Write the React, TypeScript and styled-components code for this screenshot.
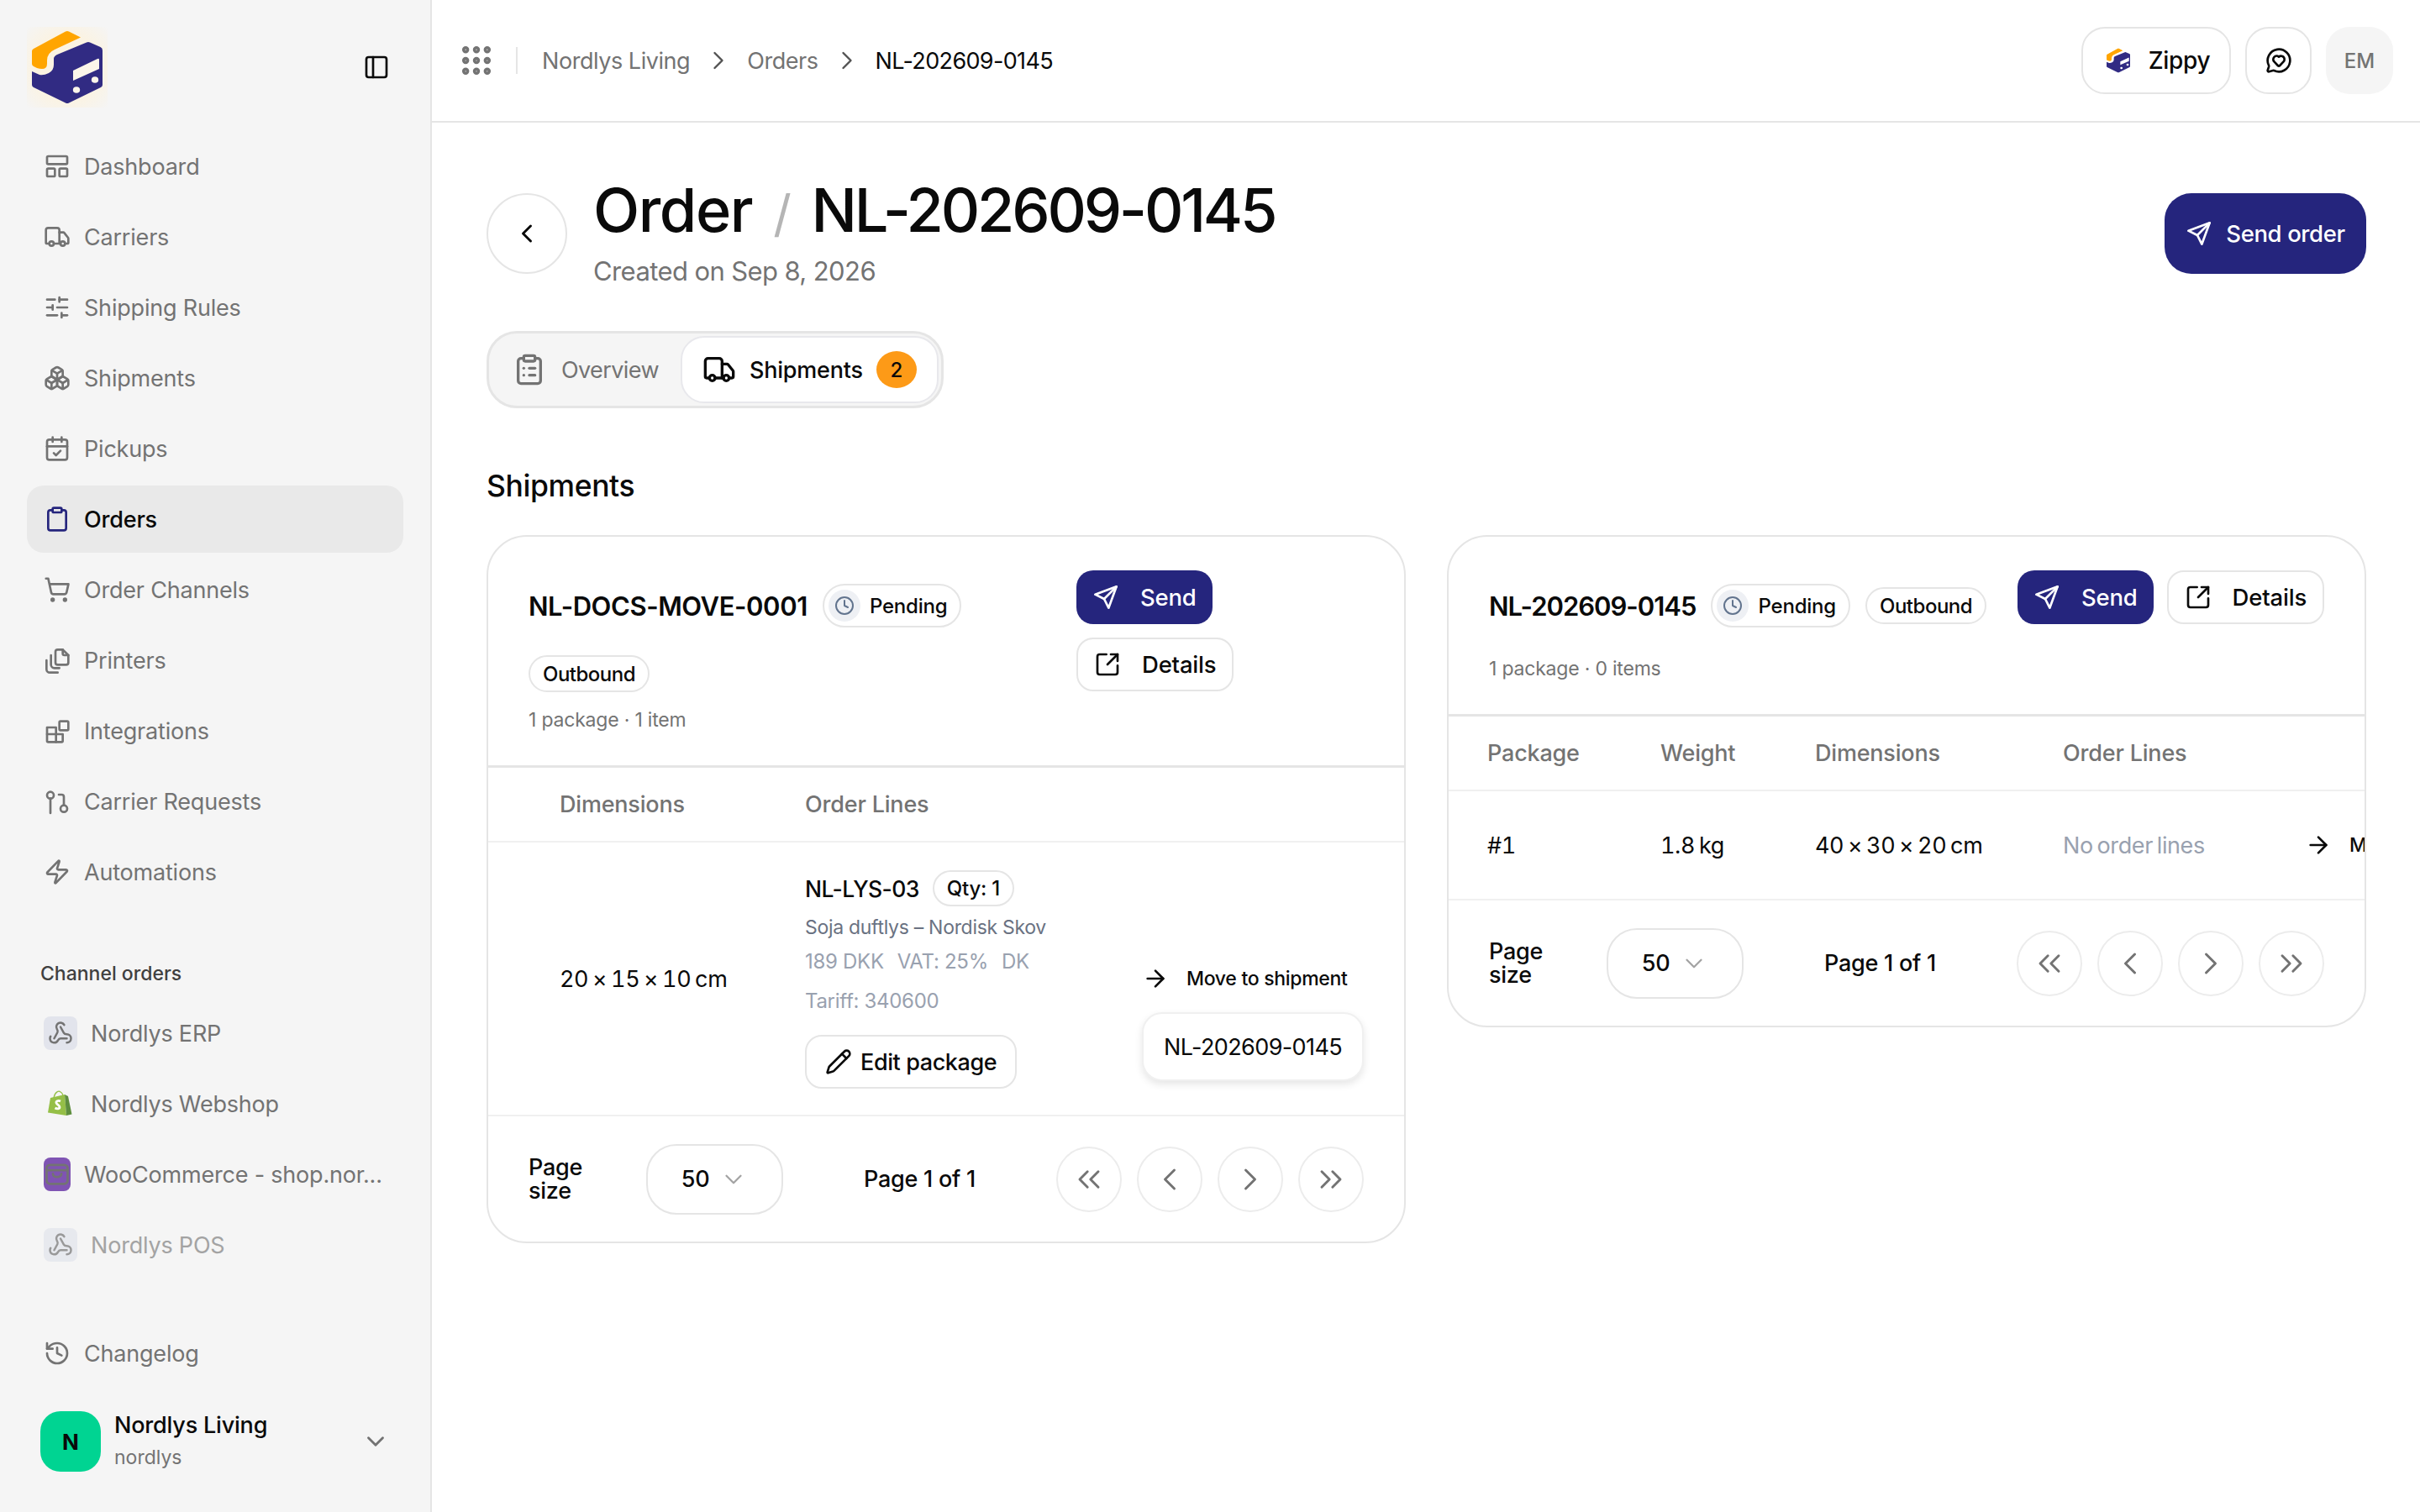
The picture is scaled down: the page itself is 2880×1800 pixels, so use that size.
import React from 'react'
import styled, { createGlobalStyle } from 'styled-components'
import {
  ArrowRight,
  Boxes,
  CalendarCheck,
  ChevronDown,
  ChevronLeft,
  ChevronRight,
  ChevronsLeft,
  ChevronsRight,
  Clipboard,
  ClipboardList,
  Clock,
  Grip,
  History,
  LayoutPanelTop,
  MessageCircleHeart,
  PanelLeft,
  Pencil,
  ShoppingCart,
  SlidersHorizontal,
  SquareArrowOutUpRight,
  Truck,
  Webhook,
  Zap,
} from 'lucide-react'

const GlobalStyle = createGlobalStyle`
  html, body {
    margin: 0;
    padding: 0;
    background: #fff;
  }
  body {
    font-family: Inter, "Liberation Sans", sans-serif;
    color: #0a0a0a;
  }
  * {
    box-sizing: border-box;
  }
`

const Shell = styled.div`
  display: flex;
  width: 2880px;
  height: 1800px;
  overflow: hidden;
`

const Sidebar = styled.aside`
  width: 514px;
  flex: none;
  background: #f5f5f5;
  border-right: 2px solid #e5e5e5;
  padding: 32px 32px 0;
  display: flex;
  flex-direction: column;
`

const SidebarTop = styled.div`
  display: flex;
  align-items: center;
  justify-content: space-between;
  height: 96px;
  padding-right: 16px;
  color: #0a0a0a;
  margin-bottom: 30px;
`

const NavList = styled.nav`
  display: flex;
  flex-direction: column;
  gap: 4px;
`

const NavItem = styled.div<{ $active?: boolean; $muted?: boolean }>`
  display: flex;
  align-items: center;
  height: 80px;
  padding-left: 20px;
  gap: 16px;
  border-radius: 20px;
  font-size: 27px;
  letter-spacing: -0.2px;
  white-space: nowrap;
  background: ${p => (p.$active ? '#e9e9e9' : 'transparent')};
  color: ${p => (p.$active ? '#0a0a0a' : p.$muted ? '#a3a3a3' : '#737373')};
  font-weight: ${p => (p.$active ? 500 : 400)};
  svg {
    flex: none;
    color: ${p => (p.$active ? '#25257d' : '#737373')};
  }
`

const GroupLabel = styled.div`
  margin: 64px 0 0 16px;
  height: 48px;
  line-height: 34px;
  font-size: 23px;
  font-weight: 500;
  color: #404040;
`

const ChannelBadge = styled.span<{ $faded?: boolean; $bare?: boolean }>`
  width: 40px;
  height: 40px;
  flex: none;
  display: flex;
  align-items: center;
  justify-content: center;
  border-radius: 8px;
  background: ${p => (p.$bare ? 'transparent' : '#e2e4ec')};
  opacity: ${p => (p.$faded ? 0.7 : 1)};
`

const SidebarBottom = styled.div`
  margin-top: auto;
  padding-bottom: 48px;
`

const Account = styled.div`
  display: flex;
  align-items: center;
  height: 72px;
  margin: 29px 0 0 16px;
  color: #737373;
  padding-right: 16px;
`

const Avatar = styled.span`
  width: 72px;
  height: 72px;
  border-radius: 24px;
  background: #00d492;
  color: #0a0a0a;
  font-size: 26px;
  font-weight: 700;
  display: flex;
  align-items: center;
  justify-content: center;
`

const AccountText = styled.div`
  flex: 1;
  margin-left: 16px;
`

const AccountName = styled.div`
  font-size: 27px;
  line-height: 38px;
  font-weight: 500;
  color: #0a0a0a;
  letter-spacing: -0.2px;
`

const AccountSlug = styled.div`
  font-size: 23px;
  line-height: 38px;
  color: #737373;
`

const Main = styled.main`
  flex: 1;
  min-width: 0;
`

const TopBar = styled.header`
  height: 146px;
  border-bottom: 2px solid #e5e5e5;
  display: flex;
  align-items: center;
  padding: 0 32px 0 31px;
`

const Crumbs = styled.div`
  display: flex;
  align-items: center;
  flex: 1;
  font-size: 27px;
  letter-spacing: -0.45px;
  color: #737373;
`

const CrumbDivider = styled.span`
  width: 2px;
  height: 32px;
  background: #e5e5e5;
  margin: 0 29px 0 25px;
`

const CrumbSep = styled.span`
  display: flex;
  margin: 0 16px;
  color: #525252;
`

const CrumbCurrent = styled.span`
  color: #0a0a0a;
  letter-spacing: -0.65px;
`

const TopActions = styled.div`
  display: flex;
  align-items: center;
  gap: 17px;
`

const ZippyButton = styled.button`
  height: 80px;
  width: 178px;
  padding: 0 0 0 3px;
  display: flex;
  align-items: center;
  justify-content: center;
  gap: 20px;
  border: 2px solid #e5e5e5;
  border-radius: 28px;
  background: #fff;
  font: inherit;
  font-size: 28px;
  font-weight: 500;
  letter-spacing: -0.3px;
  color: #0a0a0a;
`

const ChatButton = styled(ZippyButton)`
  width: 79px;
  padding: 0;
`

const Initials = styled.div`
  width: 80px;
  height: 80px;
  border-radius: 28px;
  background: #f5f5f5;
  color: #737373;
  font-size: 24px;
  font-weight: 500;
  display: flex;
  align-items: center;
  justify-content: center;
`

const Page = styled.div`
  padding: 64px 64px 0 65px;
`

const PageHeader = styled.div`
  display: flex;
  align-items: center;
  justify-content: space-between;
`

const HeaderLeft = styled.div`
  display: flex;
  align-items: center;
  gap: 31px;
`

const BackButton = styled.button`
  width: 96px;
  height: 96px;
  border: 2px solid #e5e5e5;
  border-radius: 50%;
  background: #fff;
  color: #0a0a0a;
  display: flex;
  align-items: center;
  justify-content: center;
  padding: 0;
`

const Title = styled.h1`
  margin: 0;
  font-size: 72px;
  line-height: 80px;
  font-weight: 500;
  letter-spacing: -1.4px;
  color: #0a0a0a;
  white-space: nowrap;
`

const TitleSlash = styled.span`
  display: inline-block;
  color: #b5b5b5;
  font-size: 60px;
  font-weight: 400;
  margin: 0 25px;
`

const TitleId = styled.span`
  letter-spacing: -3.2px;
`

const Subtitle = styled.div`
  font-size: 31px;
  line-height: 46px;
  margin-top: 6px;
  color: #737373;
  letter-spacing: -0.6px;
`

const PrimaryLarge = styled.button`
  height: 96px;
  width: 240px;
  border: 0;
  border-radius: 32px;
  background: #25257d;
  color: #fff;
  font: inherit;
  font-size: 27.5px;
  font-weight: 500;
  letter-spacing: -0.4px;
  display: flex;
  align-items: center;
  justify-content: center;
  gap: 16px;
  white-space: nowrap;
`

const Tabs = styled.div`
  display: inline-flex;
  align-items: center;
  margin-top: 48px;
  height: 92px;
  padding: 0 3px 0 0;
  background: #f5f5f5;
  border: 3px solid #e5e5e5;
  border-radius: 36px;
`

const Tab = styled.div<{ $active?: boolean }>`
  display: flex;
  align-items: center;
  height: ${p => (p.$active ? '80px' : 'auto')};
  border-radius: 28px;
  font-size: 27px;
  letter-spacing: ${p => (p.$active ? '-0.2px' : '-0.6px')};
  font-weight: ${p => (p.$active ? 500 : 400)};
  color: ${p => (p.$active ? '#0a0a0a' : '#737373')};
  background: ${p => (p.$active ? '#fff' : 'transparent')};
  border: ${p => (p.$active ? '2px solid #e8e8ec' : '0')};
  padding: ${p => (p.$active ? '0 24px 0 24px' : '0 26px 0 28px')};
  gap: ${p => (p.$active ? '16px' : '18px')};
`

const CountBadge = styled.span`
  width: 48px;
  height: 44px;
  border-radius: 50%;
  background: #fd9a17;
  color: #0a0a0a;
  font-size: 24px;
  font-weight: 500;
  display: flex;
  align-items: center;
  justify-content: center;
`

const SectionTitle = styled.h2`
  margin: 69px 0 34px;
  font-size: 35.500px;
  line-height: 48px;
  font-weight: 500;
  letter-spacing: -0.4px;
  color: #0a0a0a;
`

const CardGrid = styled.div`
  display: grid;
  grid-template-columns: 1fr 1fr;
  gap: 49px;
  align-items: start;
`

const Card = styled.section`
  border: 2px solid #e5e5e5;
  border-radius: 48px;
  overflow: hidden;
  background: #fff;
`

const CardHeader = styled.div`
  display: flex;
  justify-content: space-between;
  align-items: flex-start;
  padding: 40px 48px 37px;
  border-bottom: 3px solid #e5e5e5;
`

const CardInfo = styled.div`
  padding-top: 16px;
`

const TitleRow = styled.div<{ $wrapped?: boolean }>`
  display: flex;
  flex-wrap: ${p => (p.$wrapped ? 'wrap' : 'nowrap')};
  align-items: center;
  gap: ${p => (p.$wrapped ? '33px 18px' : '0 18px')};
  width: ${p => (p.$wrapped ? '530px' : 'auto')};
  white-space: nowrap;
`

const ShipmentId = styled.span<{ $digits?: boolean }>`
  font-size: 31px;
  font-weight: 600;
  letter-spacing: ${p => (p.$digits ? '-1px' : '-0.42px')};
  color: #0a0a0a;
`

const StatusPill = styled.span`
  height: 52px;
  display: inline-flex;
  align-items: center;
  gap: 11px;
  padding: 0 15px 0 5px;
  border: 2px solid #e5e5e5;
  border-radius: 26px;
  font-size: 24px;
  letter-spacing: -0.2px;
  font-weight: 500;
`

const StatusIcon = styled.span`
  width: 38px;
  height: 38px;
  border-radius: 50%;
  background: #eef0f4;
  color: #62748e;
  display: flex;
  align-items: center;
  justify-content: center;
`

const Pill = styled.span`
  height: 44px;
  display: inline-flex;
  align-items: center;
  padding: 0 15px;
  border: 2px solid #e5e5e5;
  border-radius: 22px;
  font-size: 24px;
  letter-spacing: -0.5px;
  font-weight: 500;
`

const CardMeta = styled.div<{ $wrapped?: boolean }>`
  margin-top: ${p => (p.$wrapped ? '16px' : '32px')};
  font-size: 23px;
  line-height: 34px;
  letter-spacing: -0.2px;
  color: #737373;
`

const CardActions = styled.div<{ $stacked?: boolean }>`
  display: flex;
  flex-direction: ${p => (p.$stacked ? 'column' : 'row')};
  align-items: flex-start;
  gap: 16px;
  width: ${p => (p.$stacked ? '342px' : 'auto')};
`

const SmallButton = styled.button<{ $primary?: boolean }>`
  height: 64px;
  display: flex;
  align-items: center;
  gap: 25px;
  padding: 0 19px;
  border-radius: 20px;
  border: ${p => (p.$primary ? '0' : '2px solid #e5e5e5')};
  background: ${p => (p.$primary ? '#25257d' : '#fff')};
  color: ${p => (p.$primary ? '#fff' : '#0a0a0a')};
  font: inherit;
  font-size: 27.5px;
  font-weight: 500;
  letter-spacing: -0.2px;
  white-space: nowrap;
`

const TableRow = styled.div<{ $cols: string; $pad: number; $head?: boolean }>`
  display: grid;
  grid-template-columns: ${p => p.$cols};
  padding-left: ${p => p.$pad}px;
  align-items: center;
  border-bottom: 2px solid #f0f0f0;
  font-size: 27px;
  font-variant-numeric: tabular-nums;
  letter-spacing: ${p => (p.$head ? '-0.2px' : '-0.4px')};
  word-spacing: ${p => (p.$head ? '0' : '-2px')};
  white-space: nowrap;
  min-height: ${p => (p.$head ? '89px' : '130px')};
  color: ${p => (p.$head ? '#737373' : '#0a0a0a')};
  font-weight: ${p => (p.$head ? 500 : 400)};
`

const LineCell = styled.div`
  padding: 33px 0 31px;
  word-spacing: 0;
  font-variant-numeric: normal;
`

const LineHead = styled.div`
  display: flex;
  align-items: center;
  gap: 16px;
  font-size: 26.500px;
  letter-spacing: -0.6px;
  font-weight: 500;
`

const QtyPill = styled(Pill)`
  height: 43px;
  letter-spacing: -0.2px;
`

const LineName = styled.div`
  margin-top: 8px;
  font-size: 23px;
  line-height: 34px;
  letter-spacing: -0.3px;
  color: #6a7282;
`

const LineFacts = styled.div`
  margin-top: 7px;
  display: flex;
  gap: 16px;
  font-size: 24px;
  line-height: 34px;
  letter-spacing: -0.3px;
  color: #99a1af;
`

const LineTariff = styled(LineFacts)`
  margin-top: 13px;
`

const EditButton = styled(SmallButton)`
  margin-top: 23px;
  gap: 10px;
  padding: 0 22px;
  font-size: 27px;
  letter-spacing: -0.4px;
`

const NoLines = styled.span`
  color: #99a1af;
`

const MoveCell = styled.div`
  position: relative;
  word-spacing: 0;
`

const MoveLabel = styled.div`
  display: flex;
  align-items: center;
  gap: 21px;
  font-size: 23px;
  letter-spacing: -0.3px;
  word-spacing: 0;
  font-weight: 500;
`

const MoveMenu = styled.div`
  position: absolute;
  left: 0;
  top: 56px;
  width: 264px;
  height: 82px;
  border-radius: 24px;
  background: #fff;
  border: 2px solid #f0f0f0;
  box-shadow: 0 4px 10px rgba(0, 0, 0, 0.1);
  display: flex;
  align-items: center;
  justify-content: center;
  font-size: 27px;
  font-variant-numeric: normal;
  letter-spacing: -0.6px;
`

const CardFooter = styled.div`
  display: flex;
  align-items: center;
  height: 149px;
  padding: 0 48px;
  font-size: 27px;
  font-weight: 500;
  letter-spacing: -0.25px;
`

const PageSizeLabel = styled.div`
  width: 140px;
  padding-right: 40px;
  line-height: 28px;
`

const SizeSelect = styled.div`
  width: 163px;
  height: 84px;
  border: 2px solid #e5e5e5;
  border-radius: 36px;
  display: flex;
  align-items: center;
  justify-content: center;
  gap: 12px;
  color: #0a0a0a;
  svg {
    color: #a3a3a3;
  }
`

const PageCount = styled.div`
  flex: 1;
  text-align: center;
`

const Pager = styled.div`
  display: flex;
  gap: 18px;
`

const PagerButton = styled.button`
  width: 78px;
  height: 78px;
  padding: 0;
  border: 2px solid #ececec;
  border-radius: 50%;
  background: #fff;
  color: #737373;
  display: flex;
  align-items: center;
  justify-content: center;
`

const BRAND_NAVY = '#312b83'

const Logo = ({ size, cream = '#fbf5ea' }: { size: number; cream?: string }) => (
  <svg width={size} height={size} viewBox="0 0 96 96">
    <path
      d="M71 18.500 Q73 17.500 75 18.500 L87.500 24 Q90 25 90 28 L90 69 Q90 71 88 72 L50 90.500 Q48 91.500 46 90.500 L8 72 Q6 71 6 69 L6 53 L15 57 Q20 58 26 55 Q32 52 32 45 L32 38 Q32 35 36 33 Z"
      fill={BRAND_NAVY}
    />
    <path
      d="M46 5.500 Q48 4.500 50 5.500 L64 12.500 L33 27 Q24 31 24 40 L24 44 Q24 50 18 50 Q15 50 12 49 L8 47 Q6 46 6 44 L6 29 Q6 27 8 26 Z"
      fill="#ffa500"
    />
    <path d="M55 52 L84 38 Q86 37 86 39 L86 50 L55 64 Z" fill={cream} />
    <ellipse cx="59" cy="75" rx="4.200" ry="3.800" fill={cream} />
    <ellipse cx="81" cy="63" rx="4.200" ry="3.800" fill={cream} />
  </svg>
)

const LogoBox = styled.div`
  width: 96px;
  height: 96px;
  background: radial-gradient(circle, #fbf3e2 55%, #f6f4f0 90%, #f5f5f5 100%);
`

const SendIcon = ({ size = 32 }: { size?: number }) => (
  <svg
    width={size}
    height={size}
    viewBox="0 0 24 24"
    fill="none"
    stroke="currentColor"
    strokeWidth="2"
    strokeLinecap="round"
    strokeLinejoin="round"
  >
    <path d="M21.500 2.500 L2.500 9.500 L10.500 13.500 L14.500 21.500 Z" />
    <path d="M21.500 2.500 L10.500 13.500" />
  </svg>
)

const PrinterIcon = () => (
  <svg width="32" height="32" viewBox="0 0 24 24" fill="none" stroke="currentColor" strokeWidth="2" strokeLinecap="round" strokeLinejoin="round">
    <path d="M10.500 4.500a2 2 0 0 1 2-2h4.500l5 5v6.500a2 2 0 0 1-2 2h-7.500a2 2 0 0 1-2-2z" />
    <path d="M17 2.500v3.500a1.500 1.500 0 0 0 1.500 1.500h3.500" />
    <path d="M6.500 7.500v8.500a3 3 0 0 0 3 3h4.500" />
    <path d="M2.500 12v8a3 3 0 0 0 3 3h7" />
  </svg>
)

const IntegrationsIcon = () => (
  <svg width="32" height="32" viewBox="0 0 24 24" fill="none" stroke="currentColor" strokeWidth="2" strokeLinecap="round" strokeLinejoin="round">
    <path d="M3 9h8v6h6v6a1 1 0 0 1-1 1H4a1 1 0 0 1-1-1z" />
    <path d="M3 15h8v7" />
    <rect x="14" y="3.500" width="8" height="8" rx="1" />
  </svg>
)

const RequestsIcon = () => (
  <svg width="32" height="32" viewBox="0 0 24 24" fill="none" stroke="currentColor" strokeWidth="2" strokeLinecap="round" strokeLinejoin="round">
    <circle cx="6" cy="6.500" r="3" />
    <path d="M6 9.500v13" />
    <path d="M13.500 6h2.500a2 2 0 0 1 2 2v7" />
    <circle cx="18" cy="18.500" r="3" />
  </svg>
)

const ShopifyIcon = () => (
  <svg width="40" height="40" viewBox="0 0 40 40">
    <path d="M8 13 L25 9 L27 34 L5 30.500 Z" fill="#95bf47" />
    <path d="M25 9 L29 11 L33.500 32.500 L27 34 Z" fill="#5e8e3e" />
    <path d="M12 13 C13 6 18 4 20 6 C22 7 23 10 23 12" fill="none" stroke="#95bf47" strokeWidth="1.300" />
    <path d="M20 17 C17 15.500 14.500 17 15 19 C15.500 21 19 21.500 19 24 C19 26 16 26.500 13.500 25" fill="none" stroke="#fff" strokeWidth="2.800" />
  </svg>
)

const WooIcon = styled.span`
  width: 32px;
  height: 40px;
  flex: none;
  border-radius: 8px;
  background: #7f54b3;
  display: flex;
  align-items: center;
  justify-content: center;
  color: #6f6a7d;
`

const WooBag = () => (
  <svg width="30" height="30" viewBox="0 0 24 24" fill="none" stroke="currentColor" strokeWidth="2.200" strokeLinecap="round" strokeLinejoin="round">
    <rect x="2" y="3" width="20" height="18" rx="3" />
    <path d="M2 8h20" />
    <path d="M8 11.500a4 3 0 0 0 8 0" />
  </svg>
)

const PageFooter = () => (
  <CardFooter>
    <PageSizeLabel>Page size</PageSizeLabel>
    <SizeSelect>
      50 <ChevronDown size={34} strokeWidth={1.6} />
    </SizeSelect>
    <PageCount>Page 1 of 1</PageCount>
    <Pager>
      <PagerButton><ChevronsLeft size={44} strokeWidth={1.6} /></PagerButton>
      <PagerButton><ChevronLeft size={44} strokeWidth={1.6} /></PagerButton>
      <PagerButton><ChevronRight size={44} strokeWidth={1.6} /></PagerButton>
      <PagerButton><ChevronsRight size={44} strokeWidth={1.6} /></PagerButton>
    </Pager>
  </CardFooter>
)

const Status = () => (
  <StatusPill>
    <StatusIcon><Clock size={24} /></StatusIcon>
    Pending
  </StatusPill>
)

const navItems = [
  { label: 'Dashboard', icon: <LayoutPanelTop size={32} /> },
  { label: 'Carriers', icon: <Truck size={32} /> },
  { label: 'Shipping Rules', icon: <SlidersHorizontal size={32} /> },
  { label: 'Shipments', icon: <Boxes size={32} /> },
  { label: 'Pickups', icon: <CalendarCheck size={32} /> },
  { label: 'Orders', icon: <Clipboard size={32} />, active: true },
  { label: 'Order Channels', icon: <ShoppingCart size={32} /> },
  { label: 'Printers', icon: <PrinterIcon /> },
  { label: 'Integrations', icon: <IntegrationsIcon /> },
  { label: 'Carrier Requests', icon: <RequestsIcon /> },
  { label: 'Automations', icon: <Zap size={32} /> },
]

const App = () => (
  <Shell>
    <GlobalStyle />
    <Sidebar>
      <SidebarTop>
        <LogoBox><Logo size={96} /></LogoBox>
        <PanelLeft size={32} />
      </SidebarTop>
      <NavList>
        {navItems.map(item => (
          <NavItem key={item.label} $active={item.active}>
            {item.icon}
            {item.label}
          </NavItem>
        ))}
      </NavList>
      <GroupLabel>Channel orders</GroupLabel>
      <NavList>
        <NavItem>
          <ChannelBadge><Webhook size={30} /></ChannelBadge>
          Nordlys ERP
        </NavItem>
        <NavItem>
          <ChannelBadge $bare><ShopifyIcon /></ChannelBadge>
          Nordlys Webshop
        </NavItem>
        <NavItem>
          <WooIcon><WooBag /></WooIcon>
          WooCommerce - shop.nor...
        </NavItem>
        <NavItem $muted>
          <ChannelBadge $faded><Webhook size={30} /></ChannelBadge>
          Nordlys POS
        </NavItem>
      </NavList>
      <SidebarBottom>
        <NavItem>
          <History size={32} />
          Changelog
        </NavItem>
        <Account>
          <Avatar>N</Avatar>
          <AccountText>
            <AccountName>Nordlys Living</AccountName>
            <AccountSlug>nordlys</AccountSlug>
          </AccountText>
          <ChevronDown size={34} />
        </Account>
      </SidebarBottom>
    </Sidebar>
    <Main>
      <TopBar>
        <Crumbs>
          <Grip size={44} strokeWidth={2.6} color="#737373" />
          <CrumbDivider />
          Nordlys Living
          <CrumbSep><ChevronRight size={36} strokeWidth={1.6} /></CrumbSep>
          Orders
          <CrumbSep><ChevronRight size={36} strokeWidth={1.6} /></CrumbSep>
          <CrumbCurrent>NL-202609-0145</CrumbCurrent>
        </Crumbs>
        <TopActions>
          <ZippyButton>
            <Logo size={32} cream="#fff" />
            Zippy
          </ZippyButton>
          <ChatButton><MessageCircleHeart size={32} /></ChatButton>
          <Initials>EM</Initials>
        </TopActions>
      </TopBar>
      <Page>
        <PageHeader>
          <HeaderLeft>
            <BackButton><ChevronLeft size={36} /></BackButton>
            <div>
              <Title>
                Order<TitleSlash>/</TitleSlash><TitleId>NL-202609-0145</TitleId>
              </Title>
              <Subtitle>Created on Sep 8, 2026</Subtitle>
            </div>
          </HeaderLeft>
          <PrimaryLarge><SendIcon size={32} /> Send order</PrimaryLarge>
        </PageHeader>
        <Tabs>
          <Tab>
            <ClipboardList size={40} />
            Overview
          </Tab>
          <Tab $active>
            <Truck size={40} />
            Shipments
            <CountBadge>2</CountBadge>
          </Tab>
        </Tabs>
        <SectionTitle>Shipments</SectionTitle>
        <CardGrid>
          <Card>
            <CardHeader>
              <CardInfo>
                <TitleRow $wrapped>
                  <ShipmentId>NL-DOCS-MOVE-0001</ShipmentId>
                  <Status />
                  <Pill>Outbound</Pill>
                </TitleRow>
                <CardMeta $wrapped>1 package · 1 item</CardMeta>
              </CardInfo>
              <CardActions $stacked>
                <SmallButton $primary><SendIcon size={32} /> Send</SmallButton>
                <SmallButton><SquareArrowOutUpRight size={32} /> Details</SmallButton>
              </CardActions>
            </CardHeader>
            <TableRow $cols="292px 401px 1fr" $pad={85} $head>
              <span>Dimensions</span>
              <span>Order Lines</span>
              <span />
            </TableRow>
            <TableRow $cols="292px 401px 1fr" $pad={85}>
              <span>20 × 15 × 10 cm</span>
              <LineCell>
                <LineHead>
                  NL-LYS-03
                  <QtyPill>Qty: 1</QtyPill>
                </LineHead>
                <LineName>Soja duftlys – Nordisk Skov</LineName>
                <LineFacts>
                  <span>189 DKK</span>
                  <span>VAT: 25%</span>
                  <span>DK</span>
                </LineFacts>
                <LineTariff>Tariff: 340600</LineTariff>
                <EditButton><Pencil size={32} /> Edit package</EditButton>
              </LineCell>
              <MoveCell>
                <MoveLabel>
                  <ArrowRight size={32} />
                  Move to shipment
                </MoveLabel>
                <MoveMenu>NL-202609-0145</MoveMenu>
              </MoveCell>
            </TableRow>
            <PageFooter />
          </Card>
          <Card>
            <CardHeader>
              <CardInfo>
                <TitleRow>
                  <ShipmentId $digits>NL-202609-0145</ShipmentId>
                  <Status />
                  <Pill>Outbound</Pill>
                </TitleRow>
                <CardMeta>1 package · 0 items</CardMeta>
              </CardInfo>
              <CardActions>
                <SmallButton $primary><SendIcon size={32} /> Send</SmallButton>
                <SmallButton><SquareArrowOutUpRight size={32} /> Details</SmallButton>
              </CardActions>
            </CardHeader>
            <TableRow $cols="206px 184px 295px 288px 300px" $pad={46} $head>
              <span>Package</span>
              <span>Weight</span>
              <span>Dimensions</span>
              <span>Order Lines</span>
              <span />
            </TableRow>
            <TableRow $cols="206px 184px 295px 288px 300px" $pad={46}>
              <span>#1</span>
              <span>1.8 kg</span>
              <span>40 × 30 × 20 cm</span>
              <NoLines>No order lines</NoLines>
              <MoveLabel>
                <ArrowRight size={32} />
                Move to shipment
              </MoveLabel>
            </TableRow>
            <PageFooter />
          </Card>
        </CardGrid>
      </Page>
    </Main>
  </Shell>
)

export default App
